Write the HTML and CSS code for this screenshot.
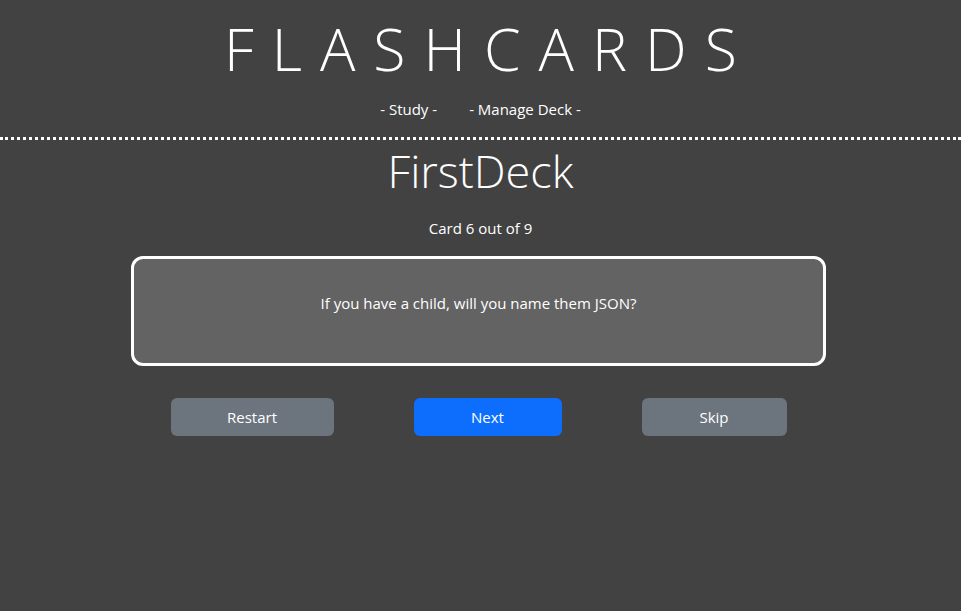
FILE: index.html
```html
<!DOCTYPE html>
<html>
<head>
<meta charset="utf-8">
<link rel="stylesheet" href="styles.css">
</head>
<body>
<header class="header">
  <h1 class="brand">FLASHCARDS</h1>
  <nav class="nav">
    <a class="nav-link">- Study -</a>
    <a class="nav-link">- Manage Deck -</a>
  </nav>
</header>
<main class="study">
  <h2 class="deck-title">FirstDeck</h2>
  <p class="counter">Card 6 out of 9</p>
  <div class="card">
    <p class="card-text">If you have a child, will you name them JSON?</p>
  </div>
  <div class="actions">
    <button class="btn btn-secondary btn-restart">Restart</button>
    <button class="btn btn-primary btn-next">Next</button>
    <button class="btn btn-secondary btn-skip">Skip</button>
  </div>
</main>
</body>
</html>
```
FILE: styles.css
```css
html, body {
  margin: 0;
  padding: 0;
  background: #424242;
  color: #fff;
  font-family: "Open Sans", "Noto Sans", sans-serif;
  font-size: 15px;
}
.header {
  text-align: center;
  border-bottom: 3px dotted #fff;
  padding-top: 12px;
  padding-bottom: 17px;
}
.brand {
  margin: 0;
  font-weight: 300;
  font-size: 59px;
  line-height: 72px;
  letter-spacing: 18px;
  padding-left: 18px;
}
.nav {
  display: flex;
  justify-content: center;
  gap: 32px;
  margin-top: 14px;
  line-height: 22px;
}
.nav-link {
  color: #fff;
}
.study {
  display: flex;
  flex-direction: column;
  align-items: center;
}
.deck-title {
  margin: 1px 0 0;
  font-weight: 300;
  font-size: 45px;
  line-height: 60px;
}
.counter {
  margin: 16px 0 0;
  line-height: 22px;
}
.card {
  box-sizing: border-box;
  width: 695px;
  height: 110px;
  margin-top: 17px;
  margin-right: 4px;
  background: #636363;
  border: 3px solid #fff;
  border-radius: 12px;
  display: flex;
  justify-content: center;
  padding-top: 33px;
}
.card-text {
  margin: 0;
  line-height: 22px;
}
.actions {
  display: flex;
  gap: 80px;
  margin-top: 32px;
  margin-right: 4px;
}
.btn {
  height: 38px;
  border: none;
  border-radius: 6px;
  color: #fff;
  font-family: inherit;
  font-size: 15px;
  padding: 0;
}
.btn-secondary { background: #6c757d; }
.btn-primary { background: #0d6efd; }
.btn-restart { width: 163px; }
.btn-next { width: 148px; }
.btn-skip { width: 145px; }
```
